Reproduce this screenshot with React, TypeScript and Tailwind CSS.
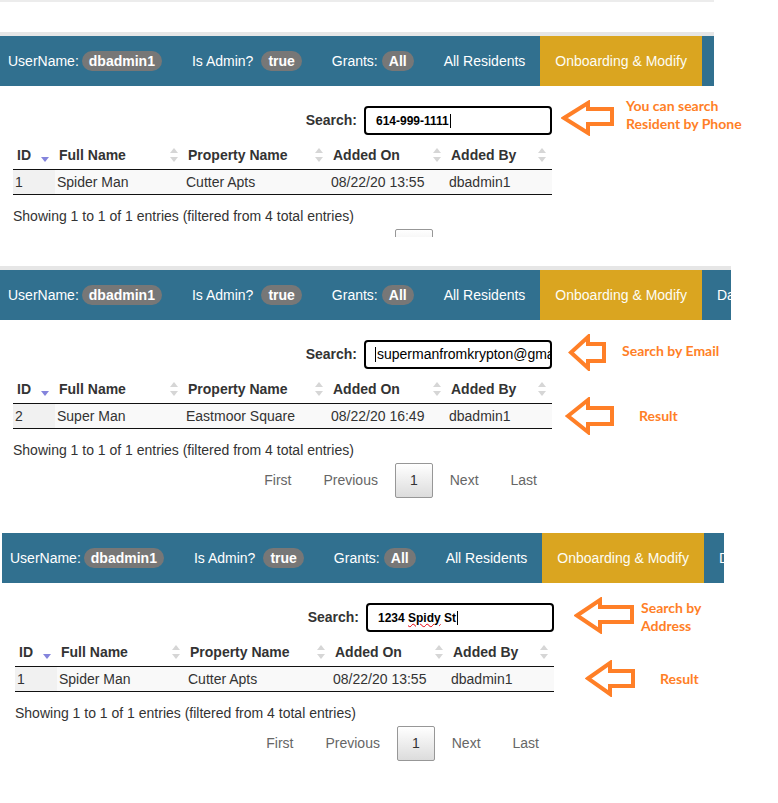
import React from "react";

// one annotation arrow: tip at left, head then shaft to the right
type ArrowProps = {
  className: string;
  w: number;
  h: number;
  head: number;
  s1: number;
  s2: number;
};

function Arrow({ className, w, h, head, s1, s2 }: ArrowProps) {
  const pts = [
    [0, h / 2],
    [head, 0],
    [head, s1],
    [w, s1],
    [w, s2],
    [head, s2],
    [head, h],
  ]
    .map(([a, b]) => `${a + 3},${b + 3}`)
    .join(" ");
  return (
    <svg className={`absolute ${className}`} width={w + 6} height={h + 6}>
      <polygon points={pts} fill="white" stroke="#ff7f27" strokeWidth={4} strokeLinejoin="miter" />
    </svg>
  );
}

function Pill({ children, className = "" }: { children: React.ReactNode; className?: string }) {
  return (
    <span className={`rounded-full bg-[#777] px-[7px] font-bold leading-[20px] text-white ${className}`}>
      {children}
    </span>
  );
}

function SortBoth() {
  return (
    <svg className="absolute right-[6px] top-1/2 -translate-y-1/2" width="8" height="14" viewBox="0 0 8 14">
      <polygon points="0,5 4,0 8,5" fill="#d6d6d6" />
      <polygon points="0,9 8,9 4,14" fill="#d6d6d6" />
    </svg>
  );
}

function SortDesc() {
  return (
    <svg className="absolute right-[6px] top-1/2 -translate-y-1/2" width="8" height="14" viewBox="0 0 8 14">
      <polygon points="0,9 8,9 4,14" fill="#8484dc" />
    </svg>
  );
}

function Header({ width }: { width: string }) {
  return (
    <div className={`flex h-[50px] items-center overflow-hidden bg-[#31708f] text-[14px] text-white ${width}`}>
      <div className="flex shrink-0 items-center pl-2 pr-[15px]">
        UserName:<Pill className="ml-[3px]">dbadmin1</Pill>
      </div>
      <div className="flex shrink-0 items-center px-[15px]">
        Is Admin?<Pill className="ml-2">true</Pill>
      </div>
      <div className="flex shrink-0 items-center px-[15px]">
        Grants:<Pill className="ml-1">All</Pill>
      </div>
      <div className="shrink-0 px-[15px]">All Residents</div>
      <div className="flex h-full shrink-0 items-center bg-[#daa520] px-[15px] text-[#fdfdf5]">
        Onboarding &amp; Modify
      </div>
      <div className="shrink-0 px-[15px]">Dashboard</div>
    </div>
  );
}

type Row = { id: string; name: string; property: string; added: string; by: string };

const COLS = "grid grid-cols-[42px_129px_145px_118px_105px]";

function Panel({
  headerWidth,
  search,
  row,
  className = "",
  children,
}: {
  headerWidth: string;
  search: React.ReactNode;
  row: Row;
  className?: string;
  children?: React.ReactNode;
}) {
  return (
    <div className={`relative ${className}`}>
      <Header width={headerWidth} />

      <div className="ml-[13px] w-[539px] text-[14px] text-[#333]">
        {/* Search */}
        <div className="mt-5 flex items-center justify-end">
          <span className="mr-[7px] font-bold">Search:</span>
          <div className="flex h-[29px] w-[188px] items-center overflow-hidden whitespace-nowrap rounded-[4px] border-2 border-black pl-[10px] text-black">
            {search}
          </div>
        </div>

        {/* Table */}
        <div className={`${COLS} mt-[6px] h-[29px] items-center border-b border-[#111] font-bold`}>
          <div className="relative flex h-full items-center pl-1">
            ID
            <SortDesc />
          </div>
          <div className="relative flex h-full items-center pl-1">
            Full Name
            <SortBoth />
          </div>
          <div className="relative flex h-full items-center pl-1">
            Property Name
            <SortBoth />
          </div>
          <div className="relative flex h-full items-center pl-1">
            Added On
            <SortBoth />
          </div>
          <div className="relative flex h-full items-center pl-1">
            Added By
            <SortBoth />
          </div>
        </div>
        <div className={`${COLS} h-[25px] border-b border-[#111] bg-[#f9f9f9]`}>
          <div className="flex items-center bg-[#f1f1f1] pl-[2px]">{row.id}</div>
          <div className="flex items-center pl-[2px]">{row.name}</div>
          <div className="flex items-center pl-[2px]">{row.property}</div>
          <div className="flex items-center pl-[2px]">{row.added}</div>
          <div className="flex items-center pl-[2px]">{row.by}</div>
        </div>

        <div className="mt-[11px] leading-[20px]">
          Showing 1 to 1 of 1 entries (filtered from 4 total entries)
        </div>

        {/* Pager */}
        <div className="mt-[3px] flex justify-end leading-[19px] text-[#666]">
          <span className="ml-[2px] border border-transparent px-[14px] py-[7px]">First</span>
          <span className="ml-[2px] border border-transparent px-[14px] py-[7px]">Previous</span>
          <span className="ml-[2px] rounded-[2px] border border-[#979797] bg-linear-to-b from-white to-[#dcdcdc] px-[14px] py-[7px] text-[#333]">
            1
          </span>
          <span className="ml-[2px] border border-transparent px-[14px] py-[7px]">Next</span>
          <span className="ml-[2px] border border-transparent px-[14px] py-[7px]">Last</span>
        </div>
      </div>

      {children}
    </div>
  );
}

const note = "absolute font-['Lato',sans-serif] text-[14px] font-bold leading-[18px] text-[#ff7f27]";

function Caret() {
  return <span className="ml-px inline-block h-[14px] w-px bg-black" />;
}

export default function App() {
  return (
    <div className="relative h-[803px] w-[778px] overflow-hidden bg-white font-['Liberation_Sans',Arial,sans-serif]">
      <div className="h-[2px] w-[714px] bg-[#ececec]" />
      <div className="mt-[30px] h-[4px] w-[714px] bg-[#e6e6e6]" />

      {/* Search by phone */}
      <Panel
        headerWidth="w-[714px]"
        className="h-[201px] overflow-hidden"
        search={
          <span className="flex items-center text-[12px] font-bold">
            614-999-1111
            <Caret />
          </span>
        }
        row={{ id: "1", name: "Spider Man", property: "Cutter Apts", added: "08/22/20 13:55", by: "dbadmin1" }}
      >
        <Arrow className="left-[561px] top-[64px]" w={48} h={30} head={24} s1={6} s2={21} />
        <div className={`${note} left-[626px] top-[61px]`}>
          You can search
          <br />
          Resident by Phone
        </div>
      </Panel>

      <div className="mt-[29px] h-[4px] w-[731px] bg-[#e6e6e6]" />

      {/* Search by email */}
      <Panel
        headerWidth="w-[731px]"
        search={
          <span className="flex items-center text-[14px]">
            <span className="-ml-[1px] mr-px inline-block h-[15px] w-px bg-black" />
            supermanfromkrypton@gmail.com
          </span>
        }
        row={{ id: "2", name: "Super Man", property: "Eastmoor Square", added: "08/22/20 16:49", by: "dbadmin1" }}
      >
        <Arrow className="left-[568px] top-[64px]" w={33} h={31} head={17} s1={7} s2={24} />
        <div className={`${note} left-[622px] top-[72px]`}>Search by Email</div>
        <Arrow className="left-[565px] top-[127px]" w={44} h={32} head={20} s1={8} s2={24} />
        <div className={`${note} left-[639px] top-[137px]`}>Result</div>
      </Panel>

      {/* Search by address */}
      <Panel
        headerWidth="w-[722px]"
        className="ml-[2px] mt-[35px]"
        search={
          <span className="flex items-center text-[12px] font-bold">
            1234&nbsp;
            <span className="underline decoration-red-600 decoration-wavy decoration-1">Spidy</span>
            &nbsp;St
            <Caret />
          </span>
        }
        row={{ id: "1", name: "Spider Man", property: "Cutter Apts", added: "08/22/20 13:55", by: "dbadmin1" }}
      >
        <Arrow className="left-[572px] top-[64px]" w={55} h={31} head={23} s1={7} s2={22} />
        <div className={`${note} left-[639px] top-[66px]`}>
          Search by
          <br />
          Address
        </div>
        <Arrow className="left-[583px] top-[127px]" w={45} h={31} head={22} s1={8} s2={23} />
        <div className={`${note} left-[658px] top-[137px]`}>Result</div>
      </Panel>
    </div>
  );
}
